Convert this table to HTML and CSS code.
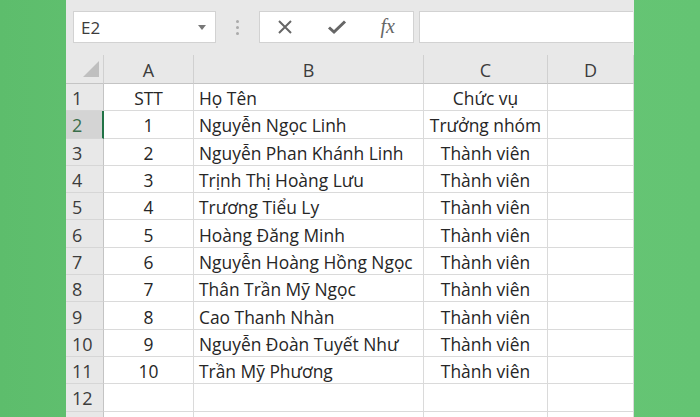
FILE: index.html
```html
<!DOCTYPE html>
<html lang="vi">
<head>
<meta charset="utf-8">
<link rel="stylesheet" href="styles.css">
</head>
<body>
<div class="window">
  <div class="toolbar">
    <div class="namebox">
      <span class="ref">E2</span>
      <svg class="caret" width="8" height="5" viewBox="0 0 8 5"><path d="M0 0H8L4 5Z" fill="#777"/></svg>
    </div>
    <div class="grip"><span></span><span></span><span></span></div>
    <div class="fbuttons">
      <svg class="ico" width="16" height="16" viewBox="0 0 16 16"><path d="M2 2L14 14M14 2L2 14" stroke="#666" stroke-width="2" fill="none"/></svg>
      <svg class="ico" width="20" height="16" viewBox="0 0 20 16"><path d="M2 8.5L7 13L18 2.5" stroke="#666" stroke-width="3" fill="none" stroke-linejoin="miter"/></svg>
      <span class="fx">fx</span>
    </div>
    <div class="finput"></div>
  </div>
  <div class="sheet">
    <div class="corner"><svg width="16" height="16" viewBox="0 0 16 16"><path d="M16 0V16H0Z" fill="#bfbfbf"/></svg></div>
    <div class="colhead">A</div>
    <div class="colhead">B</div>
    <div class="colhead">C</div>
    <div class="colhead">D</div>

    <div class="rowhead">1</div><div class="cell center">STT</div><div class="cell">Họ Tên</div><div class="cell center">Chức vụ</div><div class="cell"></div>
    <div class="rowhead sel">2</div><div class="cell center">1</div><div class="cell">Nguyễn Ngọc Linh</div><div class="cell center">Trưởng nhóm</div><div class="cell"></div>
    <div class="rowhead">3</div><div class="cell center">2</div><div class="cell">Nguyễn Phan Khánh Linh</div><div class="cell center">Thành viên</div><div class="cell"></div>
    <div class="rowhead">4</div><div class="cell center">3</div><div class="cell">Trịnh Thị Hoàng Lưu</div><div class="cell center">Thành viên</div><div class="cell"></div>
    <div class="rowhead">5</div><div class="cell center">4</div><div class="cell">Trương Tiểu Ly</div><div class="cell center">Thành viên</div><div class="cell"></div>
    <div class="rowhead">6</div><div class="cell center">5</div><div class="cell">Hoàng Đăng Minh</div><div class="cell center">Thành viên</div><div class="cell"></div>
    <div class="rowhead">7</div><div class="cell center">6</div><div class="cell">Nguyễn Hoàng Hồng Ngọc</div><div class="cell center">Thành viên</div><div class="cell"></div>
    <div class="rowhead">8</div><div class="cell center">7</div><div class="cell">Thân Trần Mỹ Ngọc</div><div class="cell center">Thành viên</div><div class="cell"></div>
    <div class="rowhead">9</div><div class="cell center">8</div><div class="cell">Cao Thanh Nhàn</div><div class="cell center">Thành viên</div><div class="cell"></div>
    <div class="rowhead">10</div><div class="cell center">9</div><div class="cell">Nguyễn Đoàn Tuyết Như</div><div class="cell center">Thành viên</div><div class="cell"></div>
    <div class="rowhead">11</div><div class="cell center">10</div><div class="cell">Trần Mỹ Phương</div><div class="cell center">Thành viên</div><div class="cell"></div>
    <div class="rowhead">12</div><div class="cell"></div><div class="cell"></div><div class="cell"></div><div class="cell"></div>
    <div class="rowhead"></div><div class="cell"></div><div class="cell"></div><div class="cell"></div><div class="cell"></div>
  </div>
</div>
</body>
</html>
```

FILE: styles.css
```css
html, body {
  margin: 0;
  padding: 0;
  height: 417px;
  overflow: hidden;
}
body {
  background: linear-gradient(90deg, #5dbd6c 0%, #68c676 50%, #64c473 100%);
  font-family: "Open Sans", "Noto Sans", sans-serif;
  color: #262626;
}
.window {
  margin-left: 66px;
  width: 568px;
  height: 417px;
  background: #fff;
  overflow: hidden;
}
.toolbar {
  height: 55px;
  box-sizing: border-box;
  background: #e8e8e8;
  display: flex;
  align-items: flex-start;
  padding: 11px 0 0 7px;
}
.namebox {
  width: 143px;
  height: 32px;
  box-sizing: border-box;
  background: #fff;
  border: 1px solid #d2d2d2;
  display: flex;
  align-items: center;
  justify-content: space-between;
  padding: 0 9px 0 7px;
}
.ref {
  font-size: 17px;
  color: #3c3c3c;
}
.grip {
  width: 43px;
  height: 32px;
  display: flex;
  flex-direction: column;
  align-items: center;
  justify-content: center;
  gap: 3px;
}
.grip span {
  width: 3px;
  height: 3px;
  border-radius: 50%;
  background: #aaa;
}
.fbuttons {
  width: 155px;
  height: 32px;
  box-sizing: border-box;
  background: #fff;
  border: 1px solid #d2d2d2;
  display: flex;
  align-items: center;
  justify-content: space-between;
  padding: 0 18px 0 17px;
}
.fx {
  font-family: "Liberation Serif", serif;
  font-style: italic;
  font-size: 20px;
  color: #666;
  line-height: 1;
  margin-top: -3px;
}
.finput {
  width: 214px;
  height: 32px;
  box-sizing: border-box;
  margin-left: 5px;
  background: #fff;
  border: 1px solid #d2d2d2;
  border-right: none;
}
.sheet {
  display: grid;
  grid-template-columns: 38px 90px 230px 124px 86px;
  grid-template-rows: 29px repeat(13, 27.3px);
}
.corner, .colhead, .rowhead {
  background: #e8e8e8;
  color: #3c3c3c;
  box-sizing: border-box;
}
.corner {
  border-right: 1px solid #d0d0d0;
  border-bottom: 1px solid #c4c4c4;
  display: flex;
  align-items: flex-end;
  justify-content: flex-end;
  padding: 0 4px 6px 0;
}
.colhead {
  display: flex;
  align-items: center;
  justify-content: center;
  font-size: 18px;
  border-right: 1px solid #d0d0d0;
  border-bottom: 1px solid #c4c4c4;
  padding-top: 2px;
}
.rowhead {
  display: flex;
  align-items: center;
  padding-left: 6px;
  padding-top: 2px;
  font-size: 18px;
  border-right: 1px solid #c4c4c4;
  border-bottom: 1px solid #d6d6d6;
}
.rowhead.sel {
  background: #d4d4d4;
  color: #3a6e4a;
  border-right: 2px solid #217346;
}
.cell {
  box-sizing: border-box;
  border-right: 1px solid #dadada;
  border-bottom: 1px solid #dadada;
  display: flex;
  align-items: center;
  padding-left: 5px;
  padding-top: 2px;
  font-size: 17.4px;
  white-space: nowrap;
  overflow: hidden;
}
.cell.center {
  justify-content: center;
  padding-left: 0;
}
```
